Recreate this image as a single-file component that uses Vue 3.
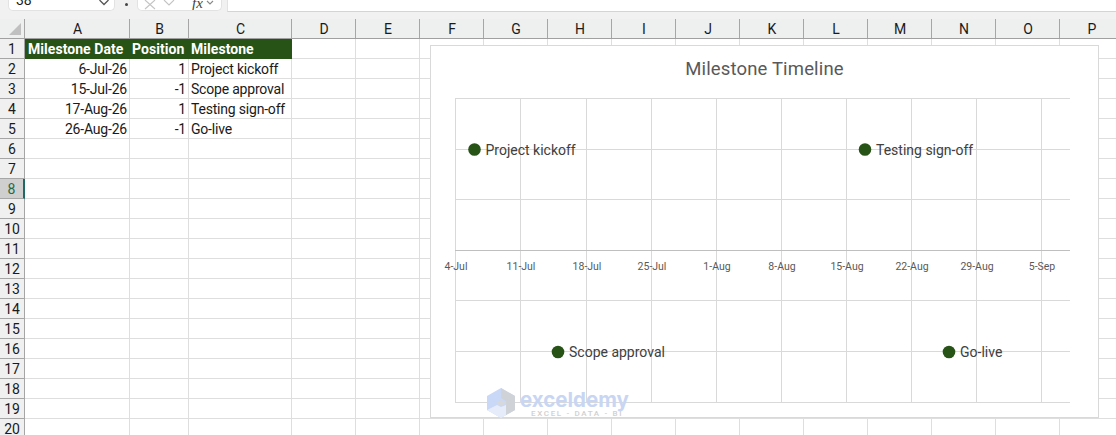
<template>
  <div class="excel">
    <!-- formula bar -->
    <div class="formula-bar">
      <div class="name-box">
        <span class="name-text">38</span>
        <svg class="chev" width="12" height="8" viewBox="0 0 12 8"><path d="M1.5 1 L6 5.5 L10.5 1" fill="none" stroke="#555" stroke-width="1.3" /></svg>
      </div>
      <div class="dots"></div>
      <div class="fx-box">
        <svg width="48" height="11" viewBox="0 0 48 11"><path d="M1 1 L11 10 M11 1 L1 10" transform="translate(5 -1)" fill="none" stroke="#c4c4c4" stroke-width="1.1" /><path d="M25 0 L30 5 L35 0" fill="none" stroke="#c4c4c4" stroke-width="1.1" /></svg>
        <span class="fx">fx</span>
        <svg class="chev-small" width="8" height="6" viewBox="0 0 8 6"><path d="M1 1 L4 4 L7 1" fill="none" stroke="#888" stroke-width="1.1" /></svg>
      </div>
      <div class="formula-input"></div>
    </div>

    <div class="sheet">
      <!-- column letters -->
      <div class="row head-row">
        <div class="corner"><span class="corner-tri"></span></div>
        <div v-for="c in columns" :key="c.name" class="col-head" :style="{ width: c.width + 'px' }">{{ c.name }}</div>
      </div>

      <!-- cells -->
      <div v-for="r in rowNumbers" :key="r" class="row">
        <div class="row-head" :class="{ selected: r === 8 }">{{ r }}</div>
        <div
          v-for="(c, i) in columns"
          :key="c.name"
          class="cell"
          :class="[r === 1 && i < 3 ? 'title-cell' : '', c.align]"
          :style="{ width: c.width + 'px' }"
        >{{ cellText(r, i) }}</div>
      </div>

      <!-- chart floats above the cells -->
      <div class="chart">
        <div class="chart-title">Milestone Timeline</div>
        <svg class="plot" width="668" height="371" viewBox="0 0 668 371">
          <g stroke="#d9d9d9" stroke-width="1">
            <line v-for="x in gridX" :key="x" :x1="x + 0.5" y1="52" :x2="x + 0.5" y2="357" />
            <line v-for="y in gridY" :key="y" x1="24" :y1="y + 0.5" x2="639" :y2="y + 0.5" />
          </g>
          <line x1="24" y1="204.5" x2="639" y2="204.5" stroke="#bfbfbf" stroke-width="1" />
          <text v-for="(t, i) in ticks" :key="t" class="tick" :x="gridX[i] + 1" y="223.5" text-anchor="middle">{{ t }}</text>
          <g v-for="m in markers" :key="m.label">
            <circle :cx="m.x" :cy="m.y" r="6.3" fill="#275317" />
            <text class="marker-label" :x="m.x + 11" :y="m.y + 5">{{ m.label }}</text>
          </g>
        </svg>
      </div>

      <!-- watermark -->
      <div class="watermark">
        <svg width="28" height="30" viewBox="0 0 28 30">
          <path d="M14 0 L28 8 L28 22 L14 30 L0 22 L0 8 Z" fill="#c9d8f6" />
          <path d="M14 0 L28 8 L28 22 L19 27 L19 13 L14 10 Z" fill="#cfd2d7" />
          <path d="M0 22 L10 17 L14 19 L19 17 L19 27 L14 30 Z" fill="#e6ecfa" />
          <path d="M9 15 L14 12 L19 15 L14 18 Z" fill="#d6d8dc" />
        </svg>
        <div class="wm-text">
          <div class="wm-name">exceldemy</div>
          <div class="wm-sub">EXCEL - DATA - BI</div>
        </div>
      </div>
    </div>
  </div>
</template>

<script setup>
const columns = [
  { name: 'A', width: 105, align: 'right' },
  { name: 'B', width: 59, align: 'right' },
  { name: 'C', width: 103, align: 'left' },
  ...['D', 'E', 'F', 'G', 'H', 'I', 'J', 'K', 'L', 'M', 'N', 'O'].map((name) => ({ name, width: 64, align: 'left' })),
  { name: 'P', width: 64, align: 'left' },
]

const rowNumbers = Array.from({ length: 20 }, (_, i) => i + 1)

const data = [
  ['Milestone Date', 'Position', 'Milestone'],
  ['6-Jul-26', '1', 'Project kickoff'],
  ['15-Jul-26', '-1', 'Scope approval'],
  ['17-Aug-26', '1', 'Testing sign-off'],
  ['26-Aug-26', '-1', 'Go-live'],
]

const cellText = (r, i) => (data[r - 1] ? data[r - 1][i] || '' : '')

// chart coordinates are relative to the chart box
const gridX = [24, 89, 155, 220, 285, 350, 415, 480, 545, 610]
const gridY = [52, 103, 153, 254, 305, 356]
const ticks = ['4-Jul', '11-Jul', '18-Jul', '25-Jul', '1-Aug', '8-Aug', '15-Aug', '22-Aug', '29-Aug', '5-Sep']

const markers = [
  { label: 'Project kickoff', x: 43.5, y: 103.5 },
  { label: 'Scope approval', x: 127, y: 306 },
  { label: 'Testing sign-off', x: 434, y: 103.5 },
  { label: 'Go-live', x: 518, y: 306 },
]
</script>

<style>
html,
body {
  margin: 0;
  background: #fff;
  overflow: hidden;
}
</style>

<style scoped>
.excel {
  width: 1116px;
  height: 435px;
  overflow: hidden;
  font-family: Roboto, "Noto Sans", sans-serif;
  color: #1a1a1a;
  background: #fff;
}

.formula-bar {
  height: 19px;
  box-sizing: border-box;
  background: #f1f1f1;
  display: flex;
  align-items: flex-start;
  position: relative;
}

.name-box {
  width: 107px;
  height: 11px;
  margin-left: 8px;
  box-sizing: border-box;
  background: #fff;
  border: 1px solid #e2e2e2;
  border-top: none;
  border-radius: 0 0 5px 5px;
  display: flex;
  justify-content: space-between;
  padding: 0 4px 0 7px;
  overflow: hidden;
}

.name-text {
  font-size: 14px;
  line-height: 14px;
  margin-top: -7px;
}

.chev {
  margin-top: -1px;
}

.dots {
  width: 3px;
  height: 3px;
  background: #444;
  border-radius: 50%;
  margin: 3px 0 0 10px;
  align-self: flex-start;
}

.fx-box {
  width: 85px;
  height: 11px;
  margin-left: 9px;
  box-sizing: border-box;
  background: #fff;
  border: 1px solid #e2e2e2;
  border-top: none;
  border-radius: 0 0 5px 5px;
  display: flex;
  overflow: hidden;
  padding-left: 1px;
}

.fx {
  font-family: "Liberation Serif", serif;
  font-style: italic;
  font-size: 15px;
  line-height: 12px;
  margin: -3px 0 0 5px;
  color: #444;
}

.chev-small {
  margin: 0 0 0 3px;
}

.formula-input {
  flex: 1;
  height: 12px;
  margin-left: 5px;
  box-sizing: border-box;
  background: #fff;
  border-left: 1px solid #e2e2e2;
  border-bottom: 1px solid #d4d4d4;
}

.sheet {
  position: relative;
}

.row {
  display: flex;
  height: 20px;
}

.head-row {
  background: #eef0f0;
  height: 20px;
  box-sizing: border-box;
  border-bottom: 1px solid #a0a0a0;
}

.corner {
  width: 25px;
  flex: none;
  position: relative;
  box-sizing: border-box;
  border-right: 1px solid #a6a6a6;
}

.corner-tri {
  position: absolute;
  right: 3px;
  bottom: 3px;
  width: 0;
  height: 0;
  border-style: solid;
  border-width: 0 0 12px 12px;
  border-color: transparent transparent #c0c0c0 transparent;
}

.col-head {
  flex: none;
  box-sizing: border-box;
  border-right: 1px solid #a6a6a6;
  text-align: center;
  font-size: 14px;
  line-height: 20px;
  padding-left: 1px;
}

.row-head {
  width: 25px;
  flex: none;
  box-sizing: border-box;
  background: #f0f0f0;
  border-right: 1px solid #a6a6a6;
  border-bottom: 1px solid #a6a6a6;
  text-align: center;
  font-size: 14px;
  line-height: 21px;
  letter-spacing: -0.1px;
}

.row-head.selected {
  background: #cfcfcf;
  color: #1f6b45;
  border-right: 2px solid #1e6b66;
}

.cell {
  flex: none;
  box-sizing: border-box;
  border-right: 1px solid #dedede;
  border-bottom: 1px solid #dedede;
  font-size: 14px;
  line-height: 21px;
  padding: 0 2px;
  white-space: nowrap;
  overflow: hidden;
  letter-spacing: -0.2px;
}

.cell.right {
  text-align: right;
}

.title-cell {
  background: #275317;
  border-color: #275317;
  color: #fff;
  font-weight: 700;
  text-align: left !important;
  letter-spacing: 0.05px;
}

.title-cell:nth-child(2) {
  padding-left: 3px;
}

.chart {
  position: absolute;
  left: 430px;
  top: 26px;
  width: 669px;
  height: 373px;
  box-sizing: border-box;
  background: #fff;
  border: 1px solid #d9d9d9;
}

.chart-title {
  text-align: center;
  font-size: 18.5px;
  line-height: 24px;
  margin-top: 11px;
  letter-spacing: 0.15px;
  color: #595959;
  height: 0;
}

.plot {
  display: block;
  position: absolute;
  left: 0;
  top: 0;
}

.tick {
  font-size: 10.5px;
  fill: #595959;
}

.marker-label {
  font-size: 14px;
  fill: #404040;
}

.watermark {
  position: absolute;
  left: 487px;
  top: 369px;
  display: flex;
  gap: 5px;
}

.wm-text {
  margin-top: 2px;
}

.wm-name {
  font-family: Inter, Roboto, sans-serif;
  font-weight: 700;
  font-size: 20.5px;
  line-height: 20px;
  color: #c8d6f3;
}

.wm-sub {
  font-size: 8px;
  line-height: 8px;
  letter-spacing: 1.65px;
  color: #d0d0d0;
  margin-left: 11px;
  font-weight: 500;
}
</style>
